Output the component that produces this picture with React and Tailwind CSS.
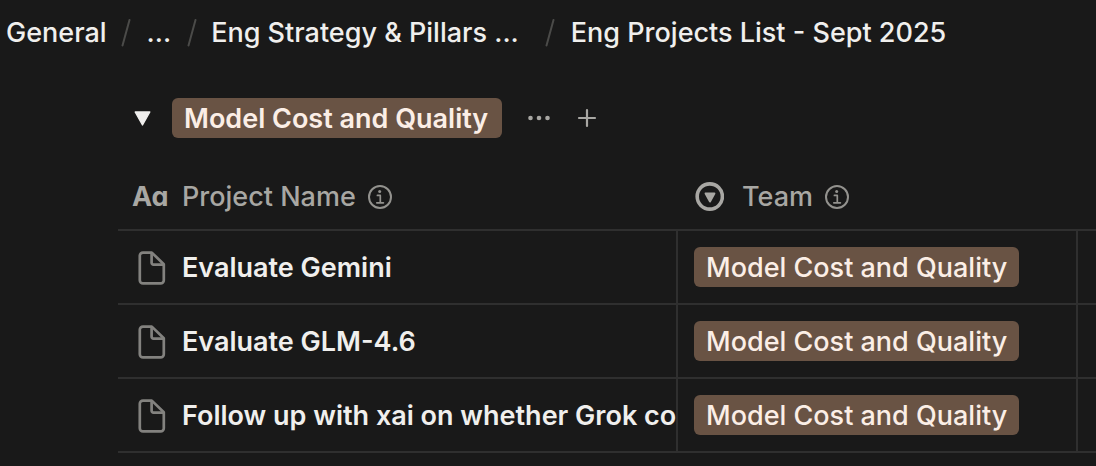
import React from "react";

const TEAM = "Model Cost and Quality";

const projects = [
  { id: "gemini", name: "Evaluate Gemini", team: TEAM },
  { id: "glm", name: "Evaluate GLM-4.6", team: TEAM },
  { id: "grok", name: "Follow up with xai on whether Grok co", team: TEAM },
];

function InfoIcon() {
  return (
    <svg viewBox="0 0 24 24" className="h-6 w-6 shrink-0 text-[#93928e]" fill="none" stroke="currentColor" aria-hidden="true">
      <circle cx="12" cy="12" r="11" strokeWidth="2" />
      <circle cx="11.7" cy="6.4" r="1.5" fill="currentColor" stroke="none" />
      <path d="M9.4 10.4h2.9v7.2M8.8 17.8h6.6" strokeWidth="1.7" strokeLinecap="round" strokeLinejoin="round" />
    </svg>
  );
}

function SelectIcon() {
  return (
    <svg viewBox="0 0 30 30" className="h-[30px] w-[30px] shrink-0" aria-hidden="true">
      <circle cx="15.8" cy="14.5" r="12.6" fill="none" stroke="currentColor" strokeWidth="3.6" />
      <path d="M11.6 11.4h8.8L16 19.4z" fill="currentColor" stroke="currentColor" strokeWidth="2" strokeLinejoin="round" />
    </svg>
  );
}

function PageIcon() {
  return (
    <svg viewBox="0 0 28 34" className="h-[34px] w-7 shrink-0 text-[#83827f]" fill="none" stroke="currentColor" strokeWidth="2.7" strokeLinejoin="round" aria-hidden="true">
      <path d="M5 1.6h8.8L25.8 13.2V29.2a3.2 3.2 0 0 1-3.2 3.2H5a3.2 3.2 0 0 1-3.2-3.2V4.8A3.2 3.2 0 0 1 5 1.6z" />
      <path d="M13.6 1.6v10.2a1.8 1.8 0 0 0 1.8 1.8h10.4" />
    </svg>
  );
}

function Slash() {
  return (
    <svg viewBox="0 0 10 28" className="h-7 w-[10px] shrink-0 text-[#4b4b49]" aria-hidden="true">
      <path d="M8.5 1L1.5 26.5" stroke="currentColor" strokeWidth="2" strokeLinecap="round" />
    </svg>
  );
}

function Tag({ children, strong }) {
  return (
    <span className={`inline-flex h-10 items-center rounded-md bg-[#695344] pt-0.5 pl-3 text-[#fbeee6] ${strong ? "pr-3.5 font-semibold" : "pr-3 font-medium"}`}>
      {children}
    </span>
  );
}

export default function App() {
  return (
    <div className="min-h-screen overflow-hidden bg-[#191919] font-['Inter','Liberation_Sans',sans-serif] text-[27px] leading-8 font-medium whitespace-nowrap text-[#f0efed]">
      <nav aria-label="Breadcrumb" className="flex h-16 items-center pt-0.5 pl-[6px]">
        <a href="#general">General</a>
        <span className="pl-3.5"><Slash /></span>
        <button type="button" aria-label="Show more" className="px-4">...</button>
        <Slash />
        <a href="#strategy" className="pl-3.5">Eng Strategy &amp; Pillars ...</a>
        <span className="pr-4 pl-[26px]"><Slash /></span>
        <a href="#projects">Eng Projects List - Sept 2025</a>
      </nav>

      <main className="pl-[118px]">
        <div className="flex items-center pt-[34px] pl-4">
          <button type="button" aria-label="Collapse group" className="mr-5">
            <svg viewBox="0 0 18 16" className="h-4 w-[18px]" aria-hidden="true">
              <path d="M1.2 2h14.6L8.5 15z" fill="currentColor" stroke="currentColor" strokeWidth="1.4" strokeLinejoin="round" />
            </svg>
          </button>
          <Tag strong>{TEAM}</Tag>
          <button type="button" aria-label="Group options" className="ml-[25px] text-[#a8a7a3]">
            <svg viewBox="0 0 24 24" className="h-6 w-6" fill="currentColor" aria-hidden="true">
              <circle cx="3.5" cy="12" r="2.3" />
              <circle cx="12" cy="12" r="2.3" />
              <circle cx="20.5" cy="12" r="2.3" />
            </svg>
          </button>
          <button type="button" aria-label="Add project" className="ml-6 text-[#a8a7a3]">
            <svg viewBox="0 0 24 24" className="h-6 w-6" fill="none" stroke="currentColor" strokeWidth="2.2" strokeLinecap="round" aria-hidden="true">
              <path d="M12 4v16M4 12h16" />
            </svg>
          </button>
        </div>

        <table className="mt-6 w-full table-fixed border-separate border-spacing-0 text-left">
          <colgroup>
            <col className="w-[560px]" />
            <col className="w-[400px]" />
            <col />
          </colgroup>
          <thead>
            <tr className="text-[#a8a7a3]">
              <th scope="col" className="h-[69px] border-b-2 border-[#2f2f2f] p-0 pt-0.5 pl-3.5 font-medium">
                <span className="flex items-center">
                  <span aria-hidden="true" className="w-[50px] font-bold [font-feature-settings:'cv11']">Aa</span>
                  <span className="mr-3">Project Name</span>
                  <InfoIcon />
                </span>
              </th>
              <th scope="col" className="h-[69px] border-b-2 border-[#2f2f2f] p-0 pt-0.5 pl-4 font-medium">
                <span className="flex items-center">
                  <span className="w-12"><SelectIcon /></span>
                  <span className="mr-3">Team</span>
                  <InfoIcon />
                </span>
              </th>
              <td className="border-b-2 border-[#2f2f2f] p-0" />
            </tr>
          </thead>
          <tbody>
            {projects.map((project) => (
              <tr key={project.id}>
                <td className="h-[74px] overflow-hidden border-r-2 border-b-2 border-[#2f2f2f] p-0 pl-5">
                  <a href={`#${project.id}`} className="flex items-center gap-4 pt-0.5 font-semibold">
                    <PageIcon />
                    <span>{project.name}</span>
                  </a>
                </td>
                <td className="h-[74px] border-r-2 border-b-2 border-[#2f2f2f] p-0 pl-4 align-middle">
                  <span className="flex"><Tag>{project.team}</Tag></span>
                </td>
                <td className="border-b-2 border-[#2f2f2f] p-0" />
              </tr>
            ))}
          </tbody>
        </table>
      </main>
    </div>
  );
}
